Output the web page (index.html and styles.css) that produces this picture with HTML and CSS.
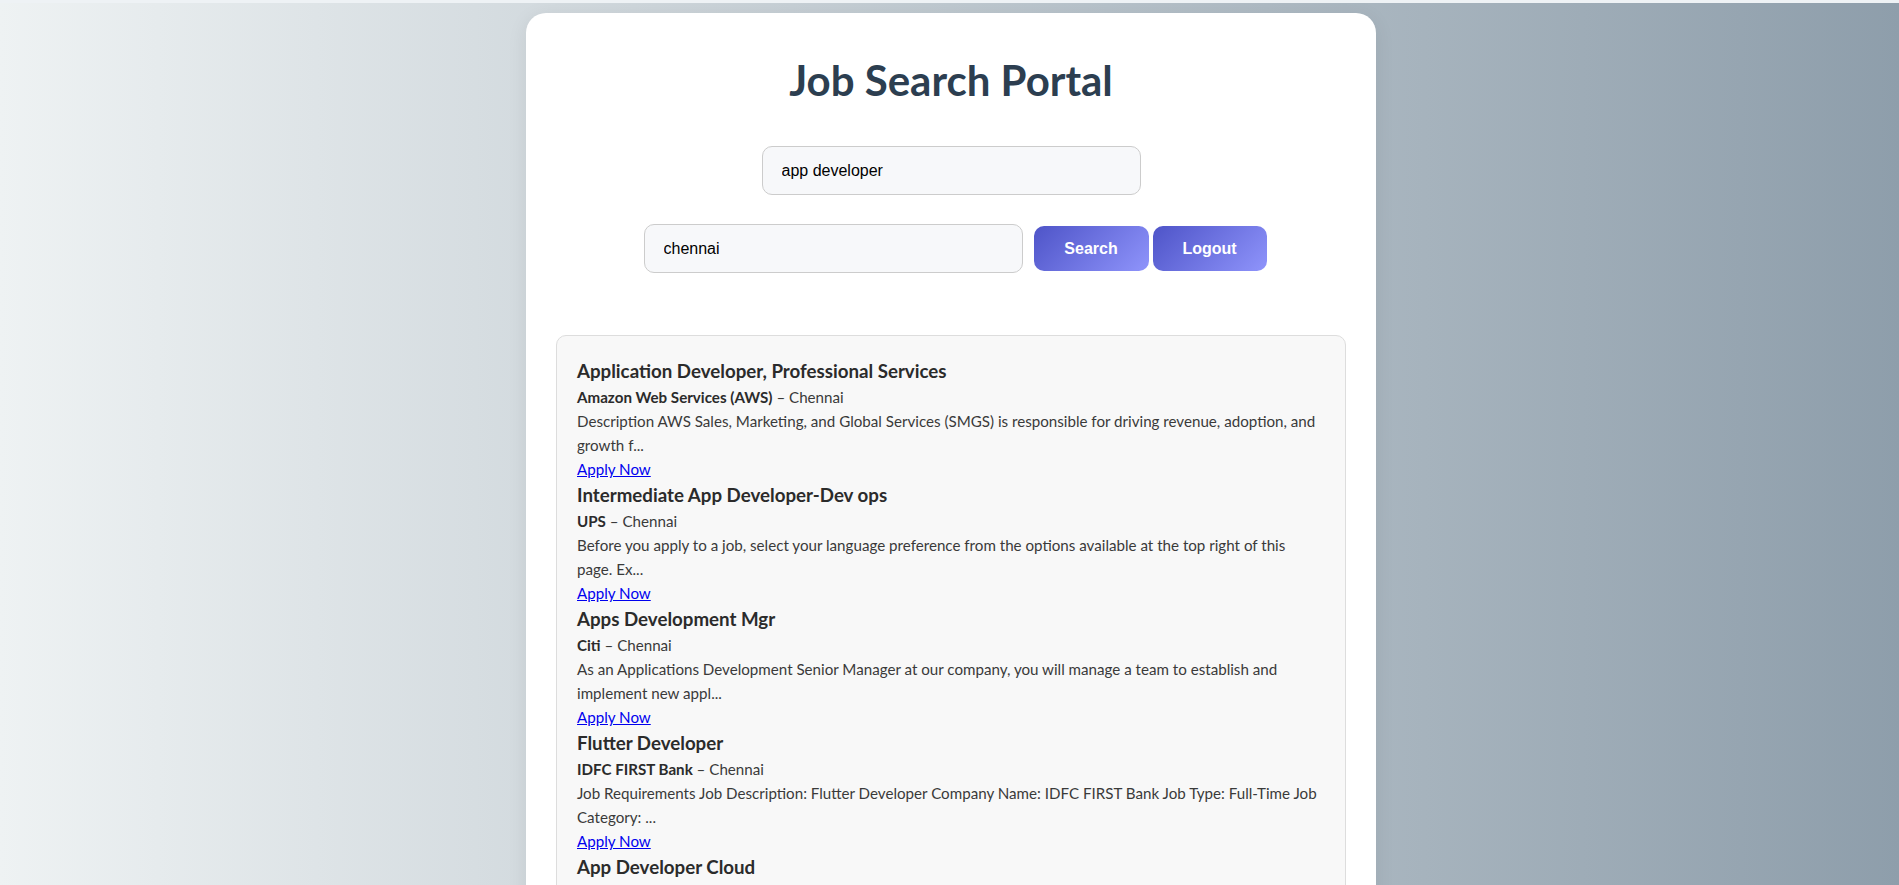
FILE: index.html
```html
<!DOCTYPE html>
<html lang="en">
<head>
<meta charset="utf-8">
<title>Job Search Portal</title>
<link rel="stylesheet" href="styles.css">
</head>
<body>
<div class="card">
  <h1 class="title">Job Search Portal</h1>
  <form class="search">
    <div class="row">
      <input class="field" type="text" value="app developer">
    </div>
    <div class="row row-actions">
      <input class="field" type="text" value="chennai">
      <button class="btn btn-search" type="button">Search</button>
      <button class="btn btn-logout" type="button">Logout</button>
    </div>
  </form>
  <div class="results">
    <div class="job">
      <h3 class="job-title">Application Developer, Professional Services</h3>
      <p class="job-meta"><strong>Amazon Web Services (AWS)</strong> – Chennai</p>
      <p class="job-desc">Description AWS Sales, Marketing, and Global Services (SMGS) is responsible for driving revenue, adoption, and growth f...</p>
      <a class="job-link" href="#">Apply Now</a>
    </div>
    <div class="job">
      <h3 class="job-title">Intermediate App Developer-Dev ops</h3>
      <p class="job-meta"><strong>UPS</strong> – Chennai</p>
      <p class="job-desc">Before you apply to a job, select your language preference from the options available at the top right of this page. Ex...</p>
      <a class="job-link" href="#">Apply Now</a>
    </div>
    <div class="job">
      <h3 class="job-title">Apps Development Mgr</h3>
      <p class="job-meta"><strong>Citi</strong> – Chennai</p>
      <p class="job-desc">As an Applications Development Senior Manager at our company, you will manage a team to establish and implement new appl...</p>
      <a class="job-link" href="#">Apply Now</a>
    </div>
    <div class="job">
      <h3 class="job-title">Flutter Developer</h3>
      <p class="job-meta"><strong>IDFC FIRST Bank</strong> – Chennai</p>
      <p class="job-desc">Job Requirements Job Description: Flutter Developer Company Name: IDFC FIRST Bank Job Type: Full-Time Job Category: ...</p>
      <a class="job-link" href="#">Apply Now</a>
    </div>
    <div class="job">
      <h3 class="job-title">App Developer Cloud</h3>
      <p class="job-meta"><strong>Company</strong> – Chennai</p>
      <p class="job-desc">Job description...</p>
      <a class="job-link" href="#">Apply Now</a>
    </div>
  </div>
</div>
</body>
</html>
```
FILE: styles.css
```css
html {
  border-top: 3px solid #eef2f5;
  background: linear-gradient(to right, #eef2f3, #8e9eab);
  min-height: 100%;
}
body {
  margin: 0;
  padding: 10px 0 40px 3px;
  font-family: "Lato", "Open Sans", sans-serif;
  background: linear-gradient(to right, #eef2f3, #8e9eab);
}
.card {
  box-sizing: border-box;
  width: 850px;
  margin: 0 auto;
  background: #fff;
  border-radius: 20px;
  padding: 30px;
  box-shadow: 0 4px 20px rgba(0, 0, 0, 0.08);
}
.title {
  margin: 12px 0 0;
  text-align: center;
  font-size: 42px;
  line-height: 50px;
  font-weight: 700;
  color: #2c3e50;
}
.search {
  display: flex;
  flex-direction: column;
  margin-top: 41px;
  gap: 29px;
}
.row {
  display: flex;
  justify-content: center;
  align-items: center;
}
.row-actions {
  padding-left: 8px;
}
.field {
  box-sizing: border-box;
  width: 379px;
  height: 49px;
  padding: 0 19px;
  border: 1px solid #ccc;
  border-radius: 10px;
  background: #f7f8fa;
  font-family: "Liberation Sans", Arial, sans-serif;
  font-size: 16px;
  color: #000;
  outline: none;
}
.btn {
  box-sizing: border-box;
  height: 45px;
  padding: 0 30px;
  border: none;
  border-radius: 10px;
  background: linear-gradient(135deg, #4e54c8, #8f94fb);
  color: #fff;
  font-family: "Liberation Sans", Arial, sans-serif;
  font-size: 16px;
  font-weight: 700;
  cursor: pointer;
}
.btn-search {
  width: 115px;
  margin-left: 11px;
}
.btn-logout {
  width: 114px;
  margin-left: 4px;
}
.results {
  margin-top: 62px;
  background: #f8f8f8;
  border: 1px solid #ddd;
  border-radius: 10px;
  padding: 21px 25px 20px 20px;
}
.job-title {
  margin: 0;
  font-size: 18.72px;
  line-height: 28px;
  font-weight: 700;
  color: #2b2b2b;
}
.job-meta,
.job-desc {
  margin: 0;
  font-size: 15.15px;
  line-height: 24px;
  color: #3a3a3a;
}
.job-meta strong {
  color: #2b2b2b;
}
.job-link {
  display: block;
  font-size: 15.15px;
  line-height: 24px;
  color: #0000ee;
  text-decoration: underline;
}
```
